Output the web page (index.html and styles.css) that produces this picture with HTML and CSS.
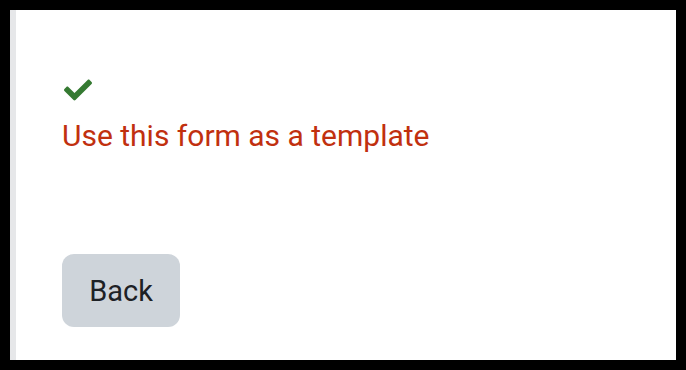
FILE: index.html
```html
<!DOCTYPE html>
<html lang="en">
<head>
    <meta charset="UTF-8" />
    <meta name="viewport" content="width=device-width, initial-scale=1.0" />
    <title>Template</title>
    <link rel="stylesheet" href="styles.css">
</head>
<body>
    <div class="frame">
        <div class="notice">
            <svg class="check" viewBox="0 0 512 512" aria-hidden="true">
                <path d="M173.9 439.4l-166.4-166.4c-10-10-10-26.2 0-36.2l36.2-36.2c10-10 26.2-10 36.2 0L192 312.7 432.1 72.6c10-10 26.2-10 36.2 0l36.2 36.2c10 10 10 26.2 0 36.2l-294.4 294.4c-10 10-26.2 10-36.2 0z"/>
            </svg>
            <p class="notice-text">Use this form as a template</p>
        </div>
        <button class="btn-back">Back</button>
    </div>
</body>
</html>
```

FILE: styles.css
```css
body {
    margin: 0;
    padding: 10px;
    background-color: #000;
    font-family: Roboto, "Liberation Sans", sans-serif;
}

.frame {
    height: 350px;
    background-color: #fff;
    border-left: 6px solid #e6e7e9;
    padding-left: 46px;
    padding-top: 66px;
    box-sizing: border-box;
}

.check {
    display: block;
    width: 28px;
    height: 28px;
    margin-left: 2px;
    fill: #357a32;
}

.notice-text {
    margin: 14px 0 0;
    color: #c1300f;
    font-size: 30px;
    line-height: 36px;
}

.btn-back {
    display: block;
    margin-top: 100px;
    width: 118px;
    height: 73px;
    border: none;
    border-radius: 12px;
    background-color: #ced4da;
    color: #1d2125;
    font-family: Roboto, "Liberation Sans", sans-serif;
    font-size: 29px;
}
```
